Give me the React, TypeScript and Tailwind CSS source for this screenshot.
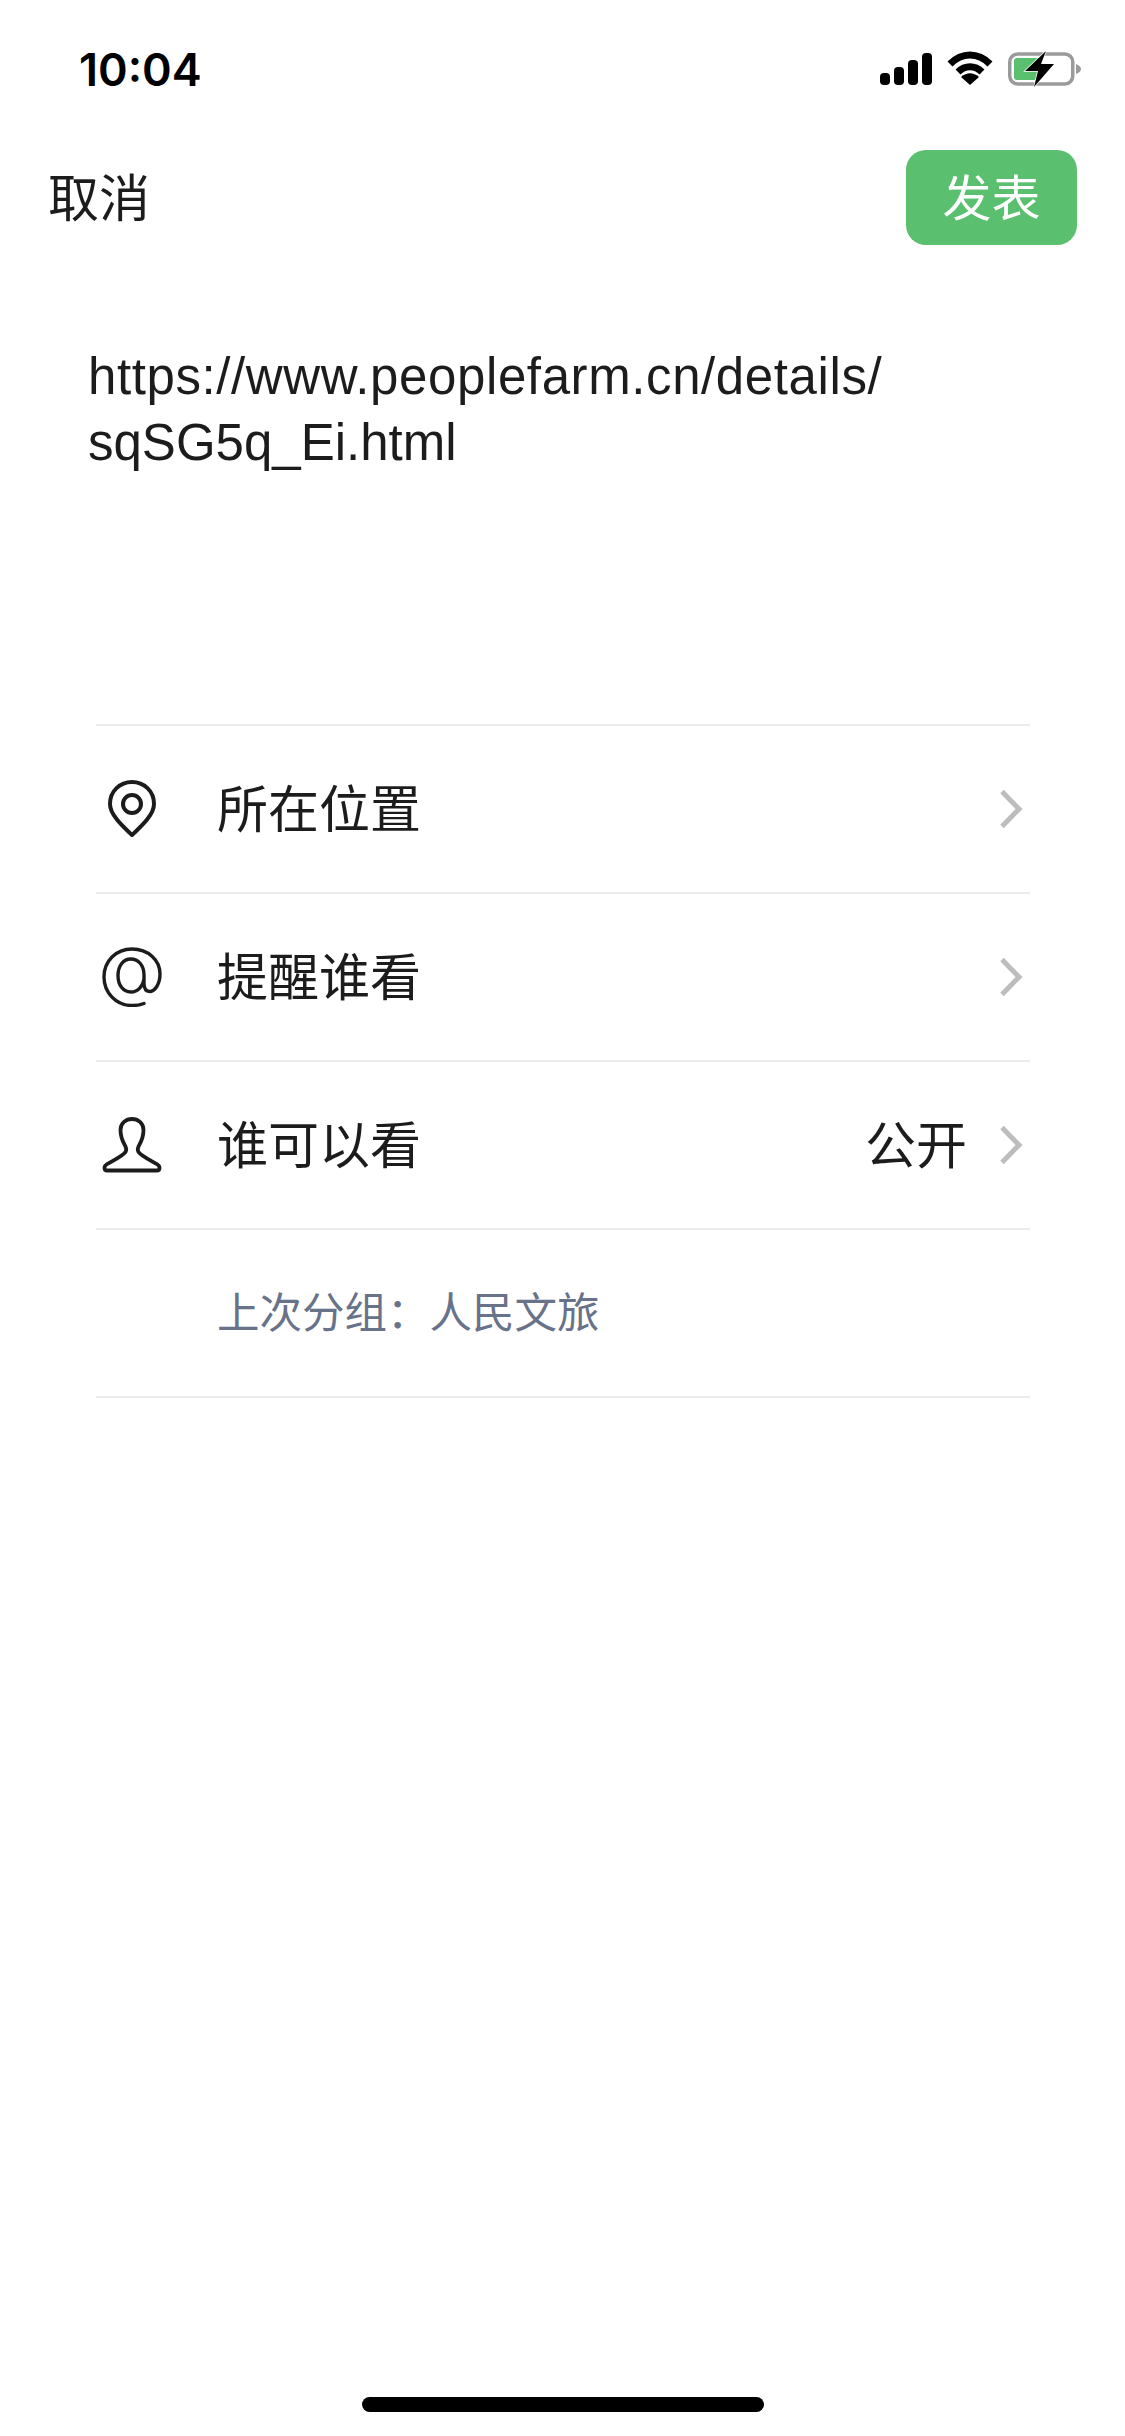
const CJK = "font-['Inter','Noto_Sans_CJK_SC',sans-serif]";

function Chevron() {
  return (
    <svg width="24" height="40" viewBox="0 0 24 40" className="shrink-0">
      <path d="M3 2.5 L20 20 L3 37.5" fill="none" stroke="#bdbdbd" strokeWidth="5" />
    </svg>
  );
}

function Pin() {
  return (
    <svg width="48" height="58" viewBox="0 0 48 58" fill="none" stroke="#1c1c1c" strokeWidth="4">
      <path d="M24 55 C18 49 2 36 2 24 C2 11 12 2 24 2 C36 2 46 11 46 24 C46 36 30 49 24 55 Z" strokeLinejoin="round" />
      <circle cx="24" cy="24" r="9" />
    </svg>
  );
}

function At() {
  return (
    <svg width="60" height="60" viewBox="0 0 60 60" fill="none" stroke="#1c1c1c" strokeWidth="3.4" strokeLinecap="round">
      <path d="M42 56.5 C38 58 34 58.5 30 58.5 C14 58.5 2 45.5 2 30 C2 14 14 2 30 2 C46 2 58 13 58 27 C58 37 53 44.5 47.5 44.5 C43.5 44.5 42 41 42 36 L42 28 C42 18 36 12 29 12 C21 12 16 19 16 28.5 C16 38 21 45 29 45 C36 45 41 39 42 32" />
    </svg>
  );
}

function Person() {
  return (
    <svg width="60" height="56" viewBox="0 0 60 56" fill="none" stroke="#1c1c1c" strokeWidth="3.8" strokeLinejoin="round">
      <path d="M5 53.5 L55 53.5 C58 53.5 58.5 49.5 55.5 47.5 C50 44 39 39 36.5 35 C35 32.5 36 30 37.5 27.5 C40 23 41.5 18 41.5 13 C41.5 6 36 2 30 2 C24 2 18.5 6 18.5 13 C18.5 18 20 23 22.5 27.5 C24 30 25 32.5 23.5 35 C21 39 10 44 4.5 47.5 C1.5 49.5 2 53.5 5 53.5 Z" />
    </svg>
  );
}

function Row({ icon, label, value }: { icon: React.ReactNode; label: string; value?: string }) {
  return (
    <div className="h-[168px] flex items-center border-b-2 border-[#ececec]">
      <div className="w-[72px] mr-[49px] flex justify-center shrink-0">{icon}</div>
      <span className="text-[51px] leading-none text-[#1c1c1c] flex-1">{label}</span>
      {value && <span className="text-[51px] leading-none text-[#1c1c1c] mr-[32px]">{value}</span>}
      <div className="mr-[7px]"><Chevron /></div>
    </div>
  );
}

export default function App() {
  return (
    <div className={`w-[1125px] h-[2436px] bg-white relative flex flex-col ${CJK}`}>
      <div className="h-[150px] shrink-0 flex justify-between pl-[79px] pr-[43px] pt-[43px]">
        <span className="text-[45px] leading-[54px] font-semibold text-black">10:04</span>
        <div className="flex items-start gap-[15px] pt-[8px]">
          <svg width="52" height="34" viewBox="0 0 52 34" fill="black" className="mt-[1px] ml-[1px]">
            <rect x="0" y="21" width="10" height="12" rx="4" />
            <rect x="14" y="15" width="10" height="18" rx="4" />
            <rect x="28" y="8" width="10" height="25" rx="4" />
            <rect x="42" y="1" width="10" height="32" rx="4" />
          </svg>
          <svg width="46" height="34" viewBox="0 0 46 34" fill="none" stroke="black" strokeWidth="7">
            <path d="M3 13 C15 1 31 1 43 13" />
            <path d="M11 21 C18 14 28 14 35 21" />
            <path d="M23 34 L14 26 C20 21 26 21 32 26 Z" fill="black" stroke="none" />
          </svg>
          <svg width="74" height="36" viewBox="0 0 74 36">
            <rect x="1.75" y="3" width="63" height="30" rx="8" fill="none" stroke="#9a9a9a" strokeWidth="3.5" />
            <path d="M68 13 C71 14 73 16 73 18 C73 20 71 22 68 23 Z" fill="#9a9a9a" />
            <rect x="6" y="7" width="28" height="22" rx="3" fill="#5ac06f" />
            <path d="M38 0 L17 20 L30 20 L26 36 L46 13 L33 13 Z" fill="black" stroke="white" strokeWidth="1.5" paintOrder="stroke" />
          </svg>
        </div>
      </div>

      <div className="h-[95px] shrink-0 flex items-center justify-between pl-[48px] pr-[48px]">
        <span className="text-[51px] leading-none text-[#1c1c1c] pt-[2px]">取消</span>
        <div className="w-[171px] h-[95px] pt-[2px] rounded-[20px] bg-[#5abf6e] flex items-center justify-center text-white text-[49px] leading-none">发表</div>
      </div>

      <div className="pl-[88px] pr-[60px] pt-[99px] h-[479px] shrink-0 text-[51px] leading-[66px] text-[#1c1c1c] font-['Liberation_Sans','Noto_Sans_CJK_SC',sans-serif]">
        <span className="tracking-[0.6px]">https://www.peoplefarm.cn/details/</span>
        <br />
        sqSG5q_Ei.html
      </div>

      <div className="ml-[96px] w-[934px] border-t-2 border-[#ececec]">
        <Row icon={<Pin />} label="所在位置" />
        <Row icon={<At />} label="提醒谁看" />
        <Row icon={<Person />} label="谁可以看" value="公开" />
        <div className="h-[168px] flex items-center pl-[121px] border-b-2 border-[#ececec] text-[42.5px] leading-none text-[#687289]">
          上次分组：人民文旅
        </div>
      </div>

      <div className="absolute left-[362px] top-[2397px] w-[402px] h-[15px] rounded-full bg-black" />
    </div>
  );
}
